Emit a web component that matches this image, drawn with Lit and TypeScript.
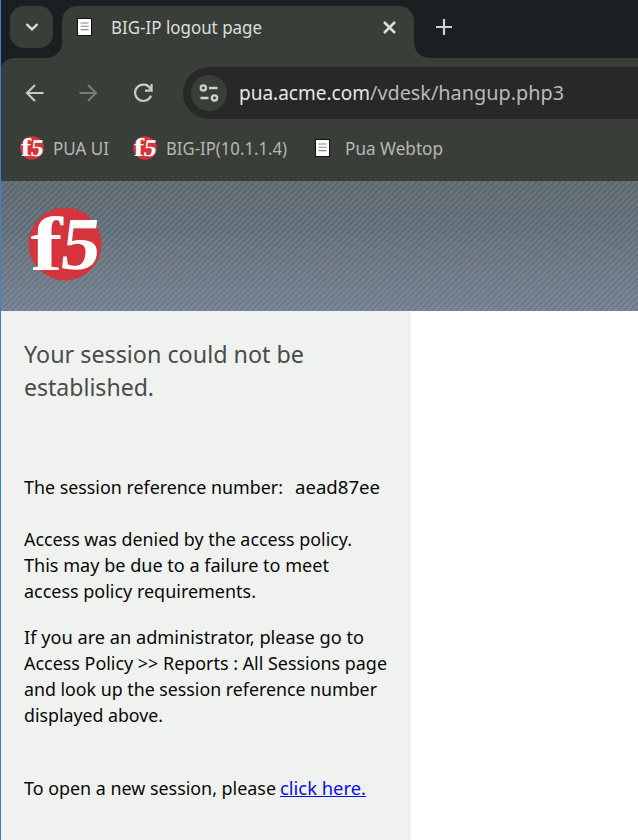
import { LitElement, html, css, svg } from "lit";
import { customElement, property } from "lit/decorators.js";

/** A single line of text condensed or expanded to a given measure. */
@customElement("fit-text")
class FitText extends LitElement {
  @property({ type: Number }) measure = 100;
  static styles = css`
    :host { display: inline-block; white-space: pre; vertical-align: top; }
    .ink { display: inline-block; transform-origin: 0 50%; text-decoration: inherit; }
  `;
  render() { return html`<span class="ink"><slot></slot></span>`; }
  firstUpdated() {
    const ink = this.renderRoot.querySelector(".ink") as HTMLElement;
    const natural = ink.getBoundingClientRect().width;
    if (natural > 0) ink.style.transform = `scaleX(${this.measure / natural})`;
    this.style.width = `${this.measure}px`;
  }
}

@customElement("f5-logo")
class F5Logo extends LitElement {
  static styles = css`
    :host { display: block; flex: none; }
    svg { display: block; width: 100%; height: 100%; overflow: visible; }
    text { font: bold 77px "Liberation Serif", serif; fill: #fff; }
  `;
  render() {
    return html`<svg viewBox="0 0 74 74">
      <circle cx="37" cy="37" r="36.4" fill="#d5343c"></circle>
      <text transform="translate(2.6 62.8) scale(1.25 0.99)">f</text>
      <text transform="translate(30.6 62.3) skewX(-7) scale(1.02 0.97)">5</text>
    </svg>`;
  }
}

const page = () => svg`
  <rect x="0.5" y="0.5" width="14" height="17" fill="#fff" stroke="#111" />
  <path d="M3.5 5H11.5M3.5 8.3H11.5M3.5 11.6H11.5" stroke="#888" stroke-width="1.1" fill="none" />`;

@customElement("app-root")
class AppRoot extends LitElement {
  static styles = css`
    :host {
      display: block; position: relative; box-sizing: border-box;
      width: 638px; height: 840px; overflow: hidden; background: #fff;
      font-family: "Noto Sans", sans-serif; font-size: 17.5px; line-height: 26px;
    }
    * { box-sizing: border-box; }
    svg { display: block; flex: none; }
    .edge { position: absolute; inset: 0 auto 0 0; width: 1px; background: #3d80d5; }
    .strip { display: flex; height: 58px; padding: 6px 0 0 10px; background: #1b1f22; }
    .menu { display: grid; place-items: center; width: 43px; height: 42px; border-radius: 14px; background: #3a3e39; }
    .tab {
      position: relative; display: flex; width: 352px; height: 52px; margin-left: 9px;
      padding: 8px 0 0 15px; border-radius: 15px 15px 0 0; background: #3a3e39; color: #dcdedb;
    }
    .tab::before, .tab::after { content: ""; position: absolute; bottom: 0; width: 15px; height: 15px; }
    .tab::before { left: -15px; background: radial-gradient(circle at 0 0, transparent 14.5px, #3a3e39 15px); }
    .tab::after { right: -15px; background: radial-gradient(circle at 100% 0, transparent 14.5px, #3a3e39 15px); }
    .tab .title { margin-left: 19px; }
    .tab .fav { margin-top: 4px; }
    .close { margin: 7px 0 0 121px; }
    .plus { margin: 13px 0 0 22px; }
    .bar { background: #1b1f22; }
    .toolbar {
      display: flex; align-items: center; height: 70px;
      padding-left: 25px; border-radius: 14px 0 0 0; background: #3a3e39;
    }
    .fwd { margin-left: 35px; }
    .reload { margin-left: 35px; }
    .omni {
      display: flex; align-items: center; flex: 1; height: 52px; margin-left: 29px; padding-left: 8px;
      border-radius: 26px 0 0 26px; background: #282828; color: #b9bab8; font-size: 19px;
    }
    .chip { display: grid; place-items: center; width: 36px; height: 36px; margin-right: 12px; border-radius: 50%; background: #3a3e39; }
    .host { color: #e6e6e4; }
    .marks { display: flex; align-items: center; height: 53px; padding: 0 0 13px 20px; background: #3a3e39; color: #b5b7b3; }
    .marks f5-logo { width: 24px; height: 24px; }
    .m1 { margin: 0 24px 0 9px; }
    .m2 { margin: 0 28px 0 9px; }
    .m3 { margin-left: 15px; }
    .banner {
      height: 130px; padding: 26px 0 0 28px;
      background:
        repeating-linear-gradient(135deg, rgba(255,255,255,0.1) 0 0.9px, transparent 1.9px 3.2px, rgba(255,255,255,0.1) 4.24px),
        linear-gradient(#5c666d, #5d6b76 35%, #687480 65%, #6f7c8e);
    }
    .banner f5-logo { width: 74px; height: 74px; }
    .panel { width: 411px; height: 529px; padding: 27px 0 0 24px; background: #f0f2ef; color: #080808; font-size: 18.2px; }
    .panel fit-text { display: block; }
    .heading { margin: 0 0 70px; font-size: 23.5px; line-height: 33px; font-weight: 400; color: #4a4b4a; }
    .row { display: flex; }
    .gap { margin-left: 12px; }
    p { margin: 0; }
    .ref { margin-bottom: 26px; }
    .denied { margin-bottom: 20px; }
    .admin { margin-bottom: 47px; }
    a { color: #0b0be8; margin-left: 4px; text-decoration: none; border-bottom: 1.5px solid #0b0be8; height: 22px; line-height: 26px; }
  `;

  private denied: [string, number][] = [
    ["Access was denied by the access policy.", 328],
    ["This may be due to a failure to meet", 305],
    ["access policy requirements.", 232],
  ];
  private admin: [string, number][] = [
    ["If you are an administrator, please go to", 340],
    ["Access Policy >> Reports : All Sessions page", 363],
    ["and look up the session reference number", 353],
    ["displayed above.", 139],
  ];

  private lines(list: [string, number][]) {
    return list.map(([t, w]) => html`<fit-text .measure=${w}>${t}</fit-text>`);
  }

  render() {
    return html`
      <div class="strip">
        <div class="menu">
          <svg width="14" height="10" viewBox="0 0 14 10" fill="none" stroke="#dcdedb" stroke-width="2.4"><path d="M1.5 2L7 7.3L12.5 2" /></svg>
        </div>
        <div class="tab">
          <svg class="fav" width="15" height="18">${page()}</svg>
          <fit-text class="title" .measure=${151}>BIG-IP logout page</fit-text>
          <svg class="close" width="13" height="13" stroke="#dcdedb" stroke-width="2.5"><path d="M1 1L12 12M12 1L1 12" /></svg>
        </div>
        <svg class="plus" width="16" height="16" stroke="#cfd1ce" stroke-width="2.2"><path d="M0 8H16M8 0V16" /></svg>
      </div>
      <div class="bar">
        <div class="toolbar">
          <svg width="19" height="18" fill="none" stroke="#c9cbc8" stroke-width="2.1"><path d="M18.5 9H2M10 1L2 9L10 17" /></svg>
          <svg class="fwd" width="19" height="18" fill="none" stroke="#777a76" stroke-width="2.1"><path d="M0.5 9H17M9 1L17 9L9 17" /></svg>
          <svg class="reload" width="21" height="20" fill="none" stroke="#c9cbc8" stroke-width="2.2"><path d="M17.6 6A8.2 8.2 0 1 0 18 12.6M18.6 1V7.6H12" /></svg>
          <div class="omni">
            <div class="chip">
              <svg width="20" height="18" fill="none" stroke="#cfd1ce" stroke-width="2.3"><circle cx="4.3" cy="4" r="2.6" /><path d="M10 4H18.5M1.5 14H9.5" /><circle cx="15.5" cy="14" r="2.6" /></svg>
            </div>
            <fit-text class="host" .measure=${131}>pua.acme.com</fit-text><fit-text .measure=${194}>/vdesk/hangup.php3</fit-text>
          </div>
        </div>
      </div>
      <div class="marks">
        <f5-logo></f5-logo><fit-text class="m1" .measure=${56}>PUA UI</fit-text>
        <f5-logo></f5-logo><fit-text class="m2" .measure=${121}>BIG-IP(10.1.1.4)</fit-text>
        <svg width="15" height="18">${page()}</svg><fit-text class="m3" .measure=${98}>Pua Webtop</fit-text>
      </div>
      <div class="banner"><f5-logo></f5-logo></div>
      <div class="panel">
        <div class="heading">
          <fit-text .measure=${280}>Your session could not be</fit-text>
          <fit-text .measure=${130}>established.</fit-text>
        </div>
        <div class="row ref">
          <fit-text .measure=${259}>The session reference number:</fit-text>
          <fit-text class="gap" .measure=${85}>aead87ee</fit-text>
        </div>
        <p class="denied">${this.lines(this.denied)}</p>
        <p class="admin">${this.lines(this.admin)}</p>
        <div class="row">
          <fit-text .measure=${252}>To open a new session, please</fit-text>
          <a href="#"><fit-text .measure=${86}>click here.</fit-text></a>
        </div>
      </div>
      <div class="edge"></div>
    `;
  }
}
